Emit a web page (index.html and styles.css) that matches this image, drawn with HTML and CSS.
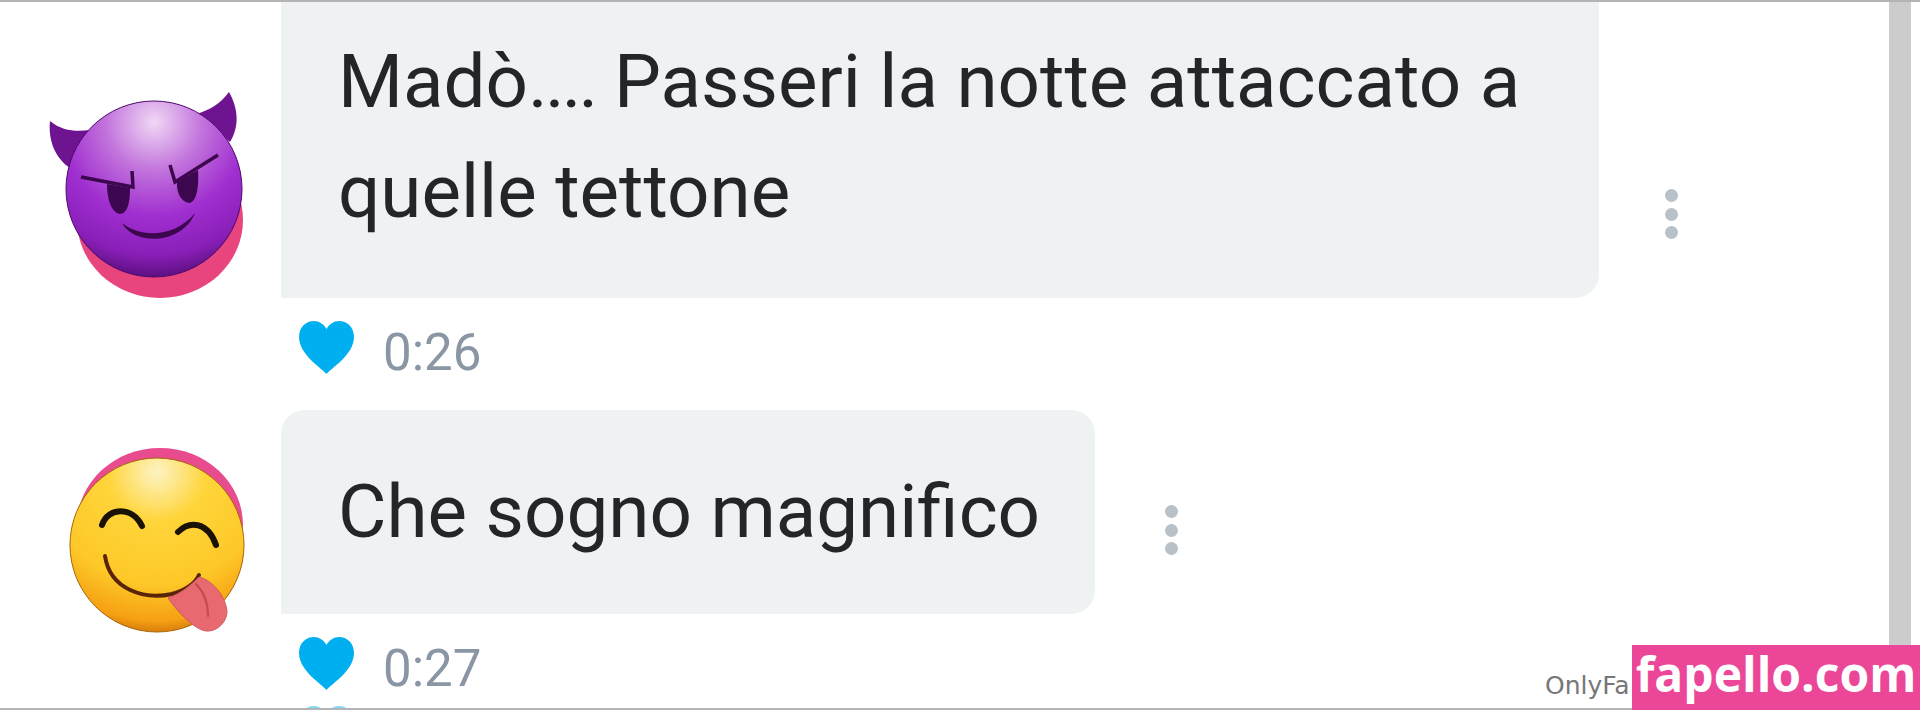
FILE: index.html
```html
<!DOCTYPE html>
<html lang="en">
<head>
    <meta charset="UTF-8">
    <title>Chat</title>
    <link rel="stylesheet" href="styles.css">
</head>
<body>
    <div class="page">
        <div class="chat">
            <div class="msg msg-first">
                <div class="avatar">
                    <svg class="emoji" viewBox="0 0 300 260" width="300" height="260">
                        <defs>
                            <radialGradient id="devil" cx="0.5" cy="0.12" r="0.92">
                                <stop offset="0" stop-color="#f0d8f5"/>
                                <stop offset="0.3" stop-color="#c273dc"/>
                                <stop offset="0.58" stop-color="#a02fd0"/>
                                <stop offset="0.82" stop-color="#8a1fb8"/>
                                <stop offset="1" stop-color="#4f0a70"/>
                            </radialGradient>
                        </defs>
                        <ellipse cx="160" cy="160" rx="83" ry="78" fill="#e8447e"/>
                        <path d="M50 61 C62 71 76 72 90 70 L70 108 C55 98 48 80 50 61Z" fill="#6f1490"/>
                        <path d="M229 32 C220 44 210 50 196 54 L230 82 C240 66 238 48 229 32Z" fill="#6f1490"/>
                        <circle cx="154" cy="129" r="88" fill="url(#devil)" stroke="#4d0a6e" stroke-width="1"/>
                        <path d="M81 117 L133 127 L132 111" fill="none" stroke="#3d0750" stroke-width="3.5"/>
                        <path d="M218 95 L175 122 L170 105" fill="none" stroke="#3d0750" stroke-width="3.5"/>
                        <path d="M107 124 L130 128 C130 142 128 153 120 154 C111 153 107 138 107 124Z" fill="#3d0750"/>
                        <path d="M177 122 L198 110 C199 126 197 142 189 143 C181 142 176 132 177 122Z" fill="#3d0750"/>
                        <path d="M122 163 C140 178 175 178 195 153 C182 185 134 186 122 163Z" fill="#3d0750"/>
                    </svg>
                </div>
                <div class="body">
                    <div class="line">
                        <div class="bubble bubble-wide">Madò<span class="ellipsis">....</span> Passeri la notte attaccato a<br>quelle tettone</div>
                        <div class="dots dots-first"><i></i><i></i><i></i></div>
                    </div>
                    <div class="meta">
                        <svg class="heart" viewBox="0 0 55 53" width="55" height="53"><path d="M27.5 53 C24 48 0 34 0 16 C0 6 7 0 15 0 C20 0 25 3 27.500 8 C30 3 35 0 40 0 C48 0 55 6 55 16 C55 34 31 48 27.500 53Z" fill="#00aff0"/></svg>
                        <span class="time">0:26</span>
                    </div>
                </div>
            </div>
            <div class="msg">
                <div class="avatar avatar-second">
                    <svg class="emoji" viewBox="0 0 300 290" width="300" height="290">
                        <defs>
                            <radialGradient id="smile" cx="0.5" cy="0.08" r="0.95">
                                <stop offset="0" stop-color="#fdf3c4"/>
                                <stop offset="0.3" stop-color="#ffd53a"/>
                                <stop offset="0.68" stop-color="#fdc828"/>
                                <stop offset="0.9" stop-color="#f6a013"/>
                                <stop offset="1" stop-color="#c9700a"/>
                            </radialGradient>
                        </defs>
                        <ellipse cx="160" cy="105" rx="83" ry="77" fill="#e84c8e"/>
                        <circle cx="157" cy="125" r="87" fill="url(#smile)" stroke="#a8650a" stroke-width="1"/>
                        <path d="M102 105 C108 87 132 86 142 106" fill="none" stroke="#1a1205" stroke-width="6" stroke-linecap="round"/>
                        <path d="M178 112 C190 100 208 102 216 125" fill="none" stroke="#1a1205" stroke-width="6" stroke-linecap="round"/>
                        <path d="M105 136 C110 170 145 180 172 174 C185 170 195 164 199 155" fill="none" stroke="#5a2408" stroke-width="4" stroke-linecap="round"/>
                        <path d="M168 178 C180 174 190 166 199 157 C212 160 226 176 227 192 C226 206 212 214 202 210 C190 205 178 192 168 178Z" fill="#e8696f" stroke="#cf5a60" stroke-width="1"/>
                        <path d="M196 164 C204 172 208 184 208 196" fill="none" stroke="#c24a55" stroke-width="2" stroke-linecap="round"/>
                    </svg>
                </div>
                <div class="body">
                    <div class="line">
                        <div class="bubble">Che sogno magnifico</div>
                        <div class="dots"><i></i><i></i><i></i></div>
                    </div>
                    <div class="meta">
                        <svg class="heart" viewBox="0 0 55 53" width="55" height="53"><path d="M27.5 53 C24 48 0 34 0 16 C0 6 7 0 15 0 C20 0 25 3 27.500 8 C30 3 35 0 40 0 C48 0 55 6 55 16 C55 34 31 48 27.500 53Z" fill="#00aff0"/></svg>
                        <span class="time">0:27</span>
                    </div>
                    <div class="meta meta-next">
                        <svg class="heart" viewBox="0 0 55 53" width="55" height="53"><path d="M27.5 53 C24 48 0 34 0 16 C0 6 7 0 15 0 C20 0 25 3 27.500 8 C30 3 35 0 40 0 C48 0 55 6 55 16 C55 34 31 48 27.500 53Z" fill="#7fd7f7"/></svg>
                    </div>
                </div>
            </div>
        </div>
        <div class="scrollbar"></div>
    </div>
    <div class="credit">OnlyFa</div>
    <div class="stamp">fapello.com</div>
</body>
</html>
```

FILE: styles.css
```css
html, body{
    margin : 0;
    height : 710px;
    overflow : hidden;
    background : #fff;
}

.page{
    height : 710px;
    box-sizing : border-box;
    border-top : 2px solid #b4b4b4;
    border-bottom : 2px solid #b4b4b4;
    display : flex;
    justify-content : space-between;
    padding-right : 9px;
    overflow : hidden;
}

.chat{
    flex : 1;
}

.msg{
    display : flex;
}

.msg-first{
    height : 408px;
}

.avatar{
    width : 281px;
    flex : none;
}

.msg-first .avatar{
    padding-top : 58px;
    height : 260px;
}

.avatar-second{
    padding-top : 10px;
}

.emoji{
    display : block;
}

.line{
    display : flex;
    align-items : flex-end;
}

.bubble{
    background : #eef2f3;
    color : #242529;
    font-family : Roboto, sans-serif;
    font-size : 74.5px;
    line-height : 110px;
    padding : 47px 55px 47px 57px;
    border-radius : 24px 24px 24px 0;
}

.bubble-wide{
    box-sizing : border-box;
    width : 1318px;
    height : 296px;
    padding : 25px 46px 0 57px;
    border-radius : 0 0 24px 0;
}

.ellipsis{
    letter-spacing : -2.8px;
}

.dots{
    margin-left : 70px;
    margin-bottom : 59px;
    display : flex;
    flex-direction : column;
    gap : 5.500px;
}

.dots-first{
    margin-left : 66px;
}

.dots i{
    display : block;
    width : 13px;
    height : 13px;
    border-radius : 50%;
    background : #b8c0c8;
}

.meta{
    display : flex;
    align-items : flex-start;
    padding : 23px 0 0 18px;
    gap : 29px;
}

.meta-next{
    padding-top : 7px;
}

.time{
    font-family : Roboto, sans-serif;
    font-size : 51px;
    line-height : 60px;
    color : #8a96a3;
    margin-top : 2px;
}

.scrollbar{
    width : 22px;
    background : #cccccc;
}

.credit{
    position : absolute;
    left : 1545px;
    top : 671px;
    font-family : "DejaVu Sans", sans-serif;
    font-size : 25px;
    color : #777;
}

.stamp{
    position : absolute;
    right : 0;
    bottom : 0;
    width : 288px;
    height : 65px;
    background : #ec4698;
    color : #fff;
    font-family : "Open Sans", sans-serif;
    font-weight : 700;
    font-size : 48px;
    line-height : 58px;
    text-align : center;
}
```
